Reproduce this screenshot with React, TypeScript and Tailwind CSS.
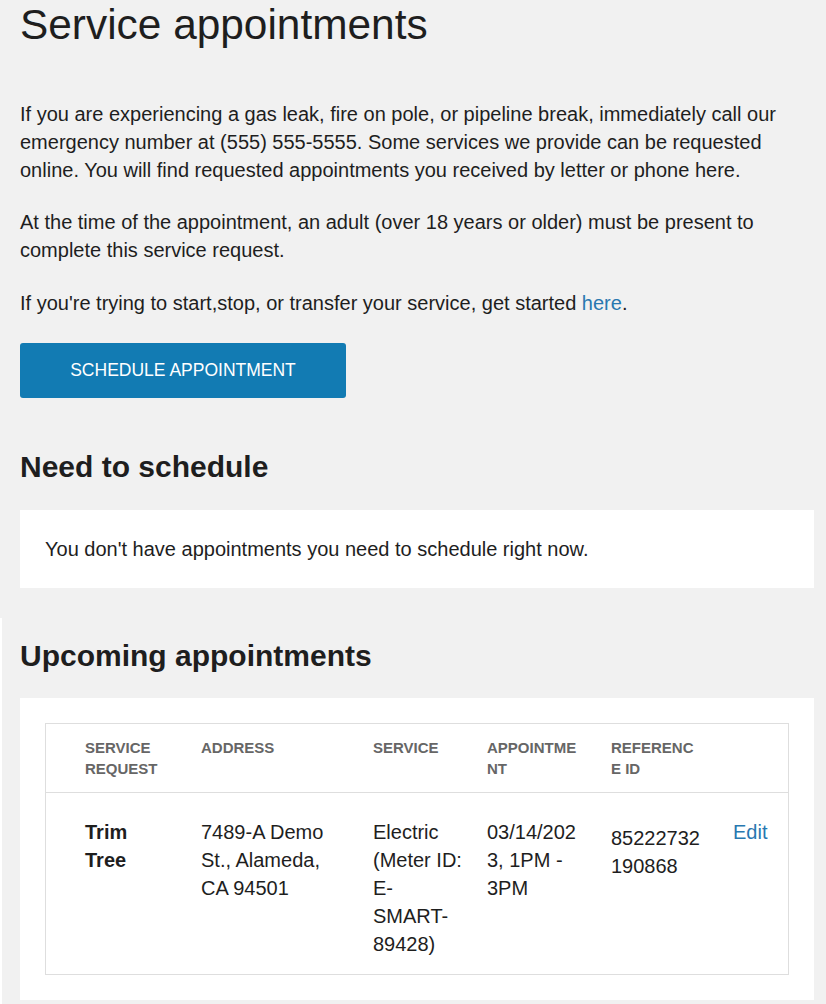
import React from "react";

const font = { fontFamily: '"Liberation Sans", Arial, sans-serif' };

type Column = { label: string[]; cell: string };

const columns: Column[] = [
  { label: ["Service", "request"], cell: "pr-[36px]" },
  { label: ["Address"], cell: "pr-[42px]" },
  { label: ["Service"], cell: "pr-[24px]" },
  { label: ["Appointment"], cell: "pr-[34px]" },
  { label: ["Reference ID"], cell: "pr-[32px]" },
  { label: [""], cell: "" },
];

const appointment = {
  request: "Trim Tree",
  address: "7489-A Demo St., Alameda, CA 94501",
  service: "Electric (Meter ID: E-SMART-89428)",
  when: "03/14/2023, 1PM - 3PM",
  reference: "85222732190868",
};

function AppointmentsTable() {
  return (
    <div className="border border-[#dedede]">
      <div className="grid grid-cols-[116px_172px_114px_124px_122px_1fr] pl-[39px] py-[13px] border-b border-[#dedede]">
        {columns.map((c, i) => (
          <div
            key={i}
            className={`${c.cell} text-[15px] leading-[21px] font-bold uppercase text-[#666666] break-words`}
          >
            {c.label.join(" ")}
          </div>
        ))}
      </div>
      <div className="grid grid-cols-[116px_172px_114px_124px_122px_1fr] pl-[39px] pt-[25px] pb-[16px] text-[20px] leading-[28px] text-[#1e1e1e]">
        <div className="pr-[36px] font-bold break-words">{appointment.request}</div>
        <div className="pr-[42px] break-words">{appointment.address}</div>
        <div className="pr-[24px] break-words">{appointment.service}</div>
        <div className="pr-[34px] break-words">{appointment.when}</div>
        <div className="pr-[32px] mt-[6px] break-all">{appointment.reference}</div>
        <div>
          <a href="#" className="text-[#2878b0]">
            Edit
          </a>
        </div>
      </div>
    </div>
  );
}

export default function App() {
  return (
    <div className="min-h-screen bg-white text-[#1e1e1e]" style={font}>
      <section className="bg-[#f1f1f1] pl-5 pr-3 pb-[30px]">
        <h1 className="text-[42.4px] leading-[50px] font-normal text-[#1e1e1e]">
          Service appointments
        </h1>
        <p className="mt-[50px] text-[20px] leading-[28px]">
          If you are experiencing a gas leak, fire on pole, or pipeline break, immediately call our
          emergency number at (555) 555-5555. Some services we provide can be requested online. You
          will find requested appointments you received by letter or phone here.
        </p>
        <p className="mt-[24px] text-[20px] leading-[28px]">
          At the time of the appointment, an adult (over 18 years or older) must be present to
          complete this service request.
        </p>
        <p className="mt-[25px] text-[20px] leading-[28px]">
          If you're trying to start,stop, or transfer your service, get started{" "}
          <a href="#" className="text-[#2878b0]">
            here
          </a>
          .
        </p>
        <button className="mt-[26px] h-[55px] w-[326px] rounded-[3px] bg-[#127bb3] text-[17.5px] text-white uppercase">
          Schedule appointment
        </button>
        <h2 className="mt-[52px] text-[30px] leading-[34px] font-bold">Need to schedule</h2>
        <div className="mt-[26px] bg-white px-[25px] py-[25px] text-[20px] leading-[28px]">
          You don't have appointments you need to schedule right now.
        </div>
      </section>
      <section className="ml-[2px] bg-[#f1f1f1] pl-[18px] pr-3 pt-[21px] pb-1">
        <h2 className="text-[30px] leading-[34px] font-bold">Upcoming appointments</h2>
        <div className="mt-[25px] bg-white p-[25px]">
          <AppointmentsTable />
        </div>
      </section>
    </div>
  );
}
